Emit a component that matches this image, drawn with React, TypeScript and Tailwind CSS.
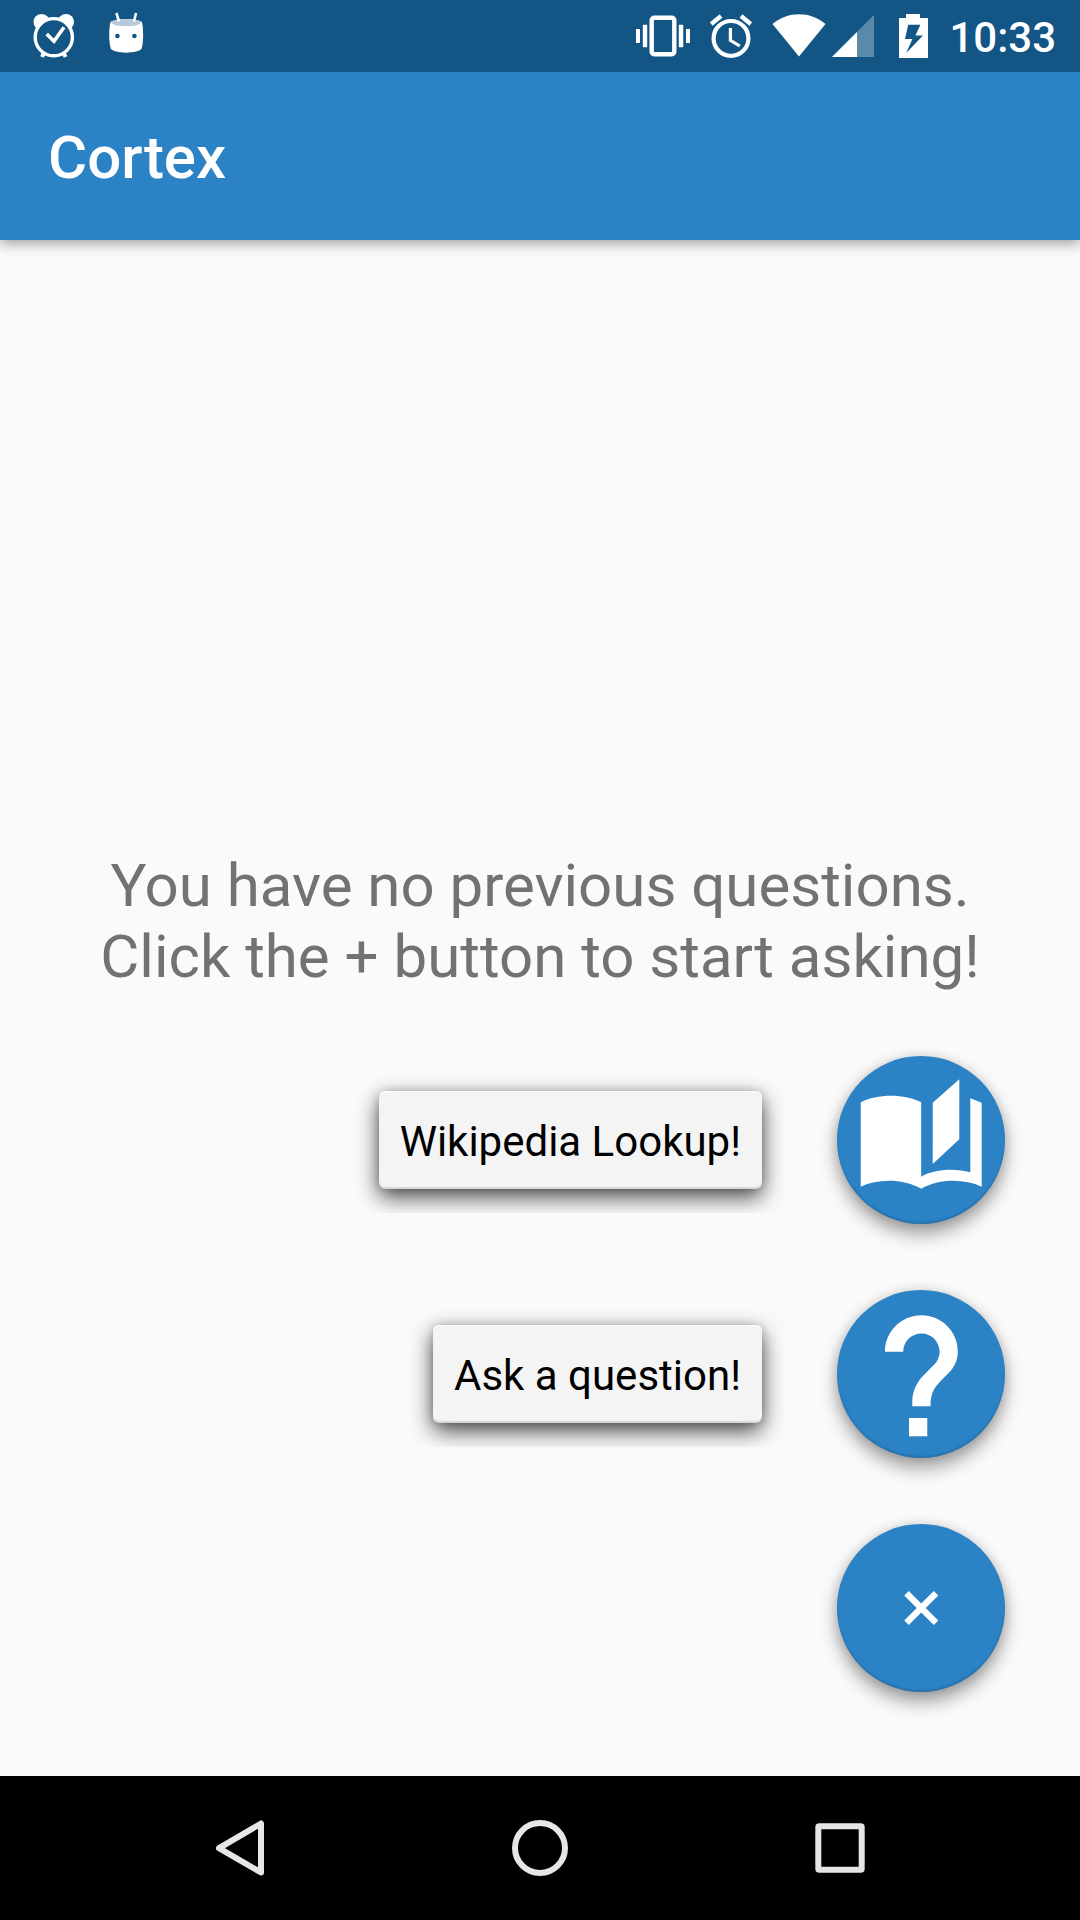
import { ReactNode } from "react";

interface FabProps {
  id: string;
  title: string;
  children: ReactNode;
}

interface MenuRowProps extends FabProps {
  label: string;
}

function StatusBar() {
  return (
    <div className="z-10 flex h-[72px] items-center justify-between bg-[#135686] pl-[30px] pr-6 text-white">
      <div className="flex items-center gap-6">
        <svg width="48" height="48" viewBox="0 0 48 48" fill="none">
          <circle cx="11.5" cy="10" r="8" fill="#fff" />
          <circle cx="36" cy="10" r="8" fill="#fff" />
          <circle
            cx="23.8"
            cy="25.2"
            r="18.6"
            fill="#135686"
            stroke="#fff"
            strokeWidth="3.4"
          />
          <path
            d="M13.5 41.5L12 45M34 41.5L35.5 45"
            stroke="#fff"
            strokeWidth="4"
          />
          <path
            d="M16.7 22L24 29.3L34 15.3"
            stroke="#fff"
            strokeWidth="3.6"
          />
        </svg>
        <svg width="48" height="48" viewBox="0 0 48 48" fill="none">
          <path
            d="M8.6 10C14 6 34 6 39.8 10C41.6 15 41.6 31 39.6 36.5C37 42 11.5 42 8.8 36.5C6.7 31 6.7 15 8.6 10Z"
            fill="#fff"
          />
          <ellipse cx="24.2" cy="10.6" rx="14.6" ry="3.6" fill="#b8c9d9" />
          <path
            d="M14.4 1L17 9.5M34 1L32 9.5"
            stroke="#fff"
            strokeWidth="2.6"
          />
          <circle cx="15.4" cy="24" r="2.3" fill="#135686" />
          <circle cx="32.4" cy="24" r="2.3" fill="#135686" />
        </svg>
      </div>

      <div className="flex items-center">
        <svg width="54" height="48" viewBox="0 0 54 48" fill="none">
          <rect
            x="15.7"
            y="5.7"
            width="22.6"
            height="36.6"
            rx="2.5"
            stroke="#fff"
            strokeWidth="4.4"
          />
          <path
            d="M0 17h4v14H0zM6.8 12.8h4.4v22.4H6.8zM42.8 12.8h4.4v22.4h-4.4zM50 17h4v14h-4z"
            fill="#fff"
          />
        </svg>
        <svg
          className="ml-5"
          width="42"
          height="48"
          viewBox="0 0 42 48"
          fill="none"
          stroke="#fff"
        >
          <circle cx="21" cy="26.4" r="17.4" strokeWidth="4.2" />
          <path d="M1.2 12L11 4M40.8 12L31 4" strokeWidth="4.4" />
          <path d="M20.4 16v12.4l9.4 5.6" strokeWidth="3.2" />
        </svg>
        <svg className="ml-5" width="54" height="48" viewBox="0 0 54 48">
          <path d="M0.5 12C16 -1 38 -1 53.5 12L27 44.5Z" fill="#fff" />
        </svg>
        <svg className="ml-1.5" width="42" height="48" viewBox="0 0 42 48">
          <path d="M0 45L42 3V45Z" fill="#fff" fillOpacity="0.3" />
          <path d="M0 45L25 20V45Z" fill="#fff" />
        </svg>
        <svg className="ml-6" width="30" height="48" viewBox="0 0 30 48">
          <path
            d="M1 6h7V2h14v4h8v40H1zM10.2 12.8L7 27h7.4L8.2 41L25 23.6h-7.6L22.4 12.8z"
            fill="#fff"
            fillRule="evenodd"
          />
        </svg>
        <span className="ml-[21px] pt-1 text-[42px] font-medium leading-[48px]">
          10:33
        </span>
      </div>
    </div>
  );
}

function Fab({ id, title, children }: FabProps) {
  return (
    <button
      id={id}
      type="button"
      aria-label={title}
      className="size-[168px] shrink-0 rounded-full bg-[#2b82c5] shadow-[0_10px_18px_rgba(0,0,0,0.36),0_0_12px_rgba(0,0,0,0.12),inset_0_-2px_2px_rgba(0,0,0,0.12)]"
    >
      <svg viewBox="0 0 168 168" fill="#fff" className="size-full">
        {children}
      </svg>
    </button>
  );
}

function MenuRow({ id, title, label, children }: MenuRowProps) {
  return (
    <div className="flex items-center gap-[75px]">
      <label
        htmlFor={id}
        className="rounded-md bg-[#f4f4f4] px-[21px] pb-[22px] pt-[26px] text-[42px] leading-[50px] text-black shadow-[0_8px_22px_rgba(0,0,0,0.72),0_0_10px_rgba(0,0,0,0.15),inset_0_-2px_1px_rgba(0,0,0,0.12),inset_0_1px_1px_#fff] [clip-path:inset(-24px)]"
      >
        {label}
      </label>
      <Fab id={id} title={title}>
        {children}
      </Fab>
    </div>
  );
}

function NavButton({ title, children }: { title: string; children: ReactNode }) {
  return (
    <button
      type="button"
      aria-label={title}
      className="flex flex-1 items-center justify-center"
    >
      <svg
        width="72"
        height="72"
        viewBox="0 0 72 72"
        fill="none"
        stroke="#e6e6e6"
        strokeWidth="6"
        strokeLinejoin="round"
      >
        {children}
      </svg>
    </button>
  );
}

export default function App() {
  return (
    <div className="flex min-h-screen flex-col bg-[#fafafa] font-[Roboto,sans-serif]">
      <StatusBar />

      <header className="flex h-[168px] items-center bg-[#2b82c5] px-12 pt-1 shadow-[0_4px_12px_rgba(0,0,0,0.35)]">
        <h1 className="text-[60px] font-medium leading-[70px] text-white">
          Cortex
        </h1>
      </header>

      <main className="flex flex-1 flex-col justify-end pb-[84px]">
        <p className="mb-16 text-center text-[60px] leading-[71px] text-[#727272]">
          You have no previous questions.
          <br />
          Click the + button to start asking!
        </p>

        <div className="flex flex-col items-end gap-[66px] pr-[75px]">
          <MenuRow
            id="wikipedia"
            title="Wikipedia Lookup"
            label="Wikipedia Lookup!"
          >
            <path d="M23.7 46.3C40 37.5 68 37.5 84.2 46.3V120.7C97 113 118 112 133.3 116.3V42.3L144.7 46.7V130.7C127 122.5 102 122.5 84.2 132.7C66 122.5 41 122.5 23.7 130.7Z" />
            <path d="M122.3 23.3L95.7 46.7V108L122.3 83.3Z" />
          </MenuRow>

          <MenuRow id="ask" title="Ask a question" label="Ask a question!">
            <path
              transform="translate(-24.8 -20.2) scale(9.1)"
              d="M15.07 11.25l-.9.92C13.45 12.9 13 13.5 13 15h-2v-.5c0-1.1.45-2.1 1.17-2.83l1.24-1.26c.37-.36.59-.86.59-1.41 0-1.1-.9-2-2-2s-2 .9-2 2H8c0-2.21 1.79-4 4-4s4 1.79 4 4c0 .88-.36 1.68-.93 2.25z"
            />
            <path d="M72 128h18.3v18.3H72z" />
          </MenuRow>

          <Fab id="toggle" title="Close menu">
            <path
              d="M69.5 69.3L99 98.8M99 69.3L69.5 98.8"
              stroke="#fff"
              strokeWidth="6.4"
            />
          </Fab>
        </div>
      </main>

      <nav className="flex h-36 bg-black px-[90px]">
        <NavButton title="Back">
          <path d="M57 11.5V60.5L15 36.2Z" />
        </NavButton>
        <NavButton title="Home">
          <circle cx="36" cy="36" r="25" />
        </NavButton>
        <NavButton title="Recent apps">
          <rect x="14.3" y="14.3" width="43.4" height="43.4" rx="1" />
        </NavButton>
      </nav>
    </div>
  );
}
